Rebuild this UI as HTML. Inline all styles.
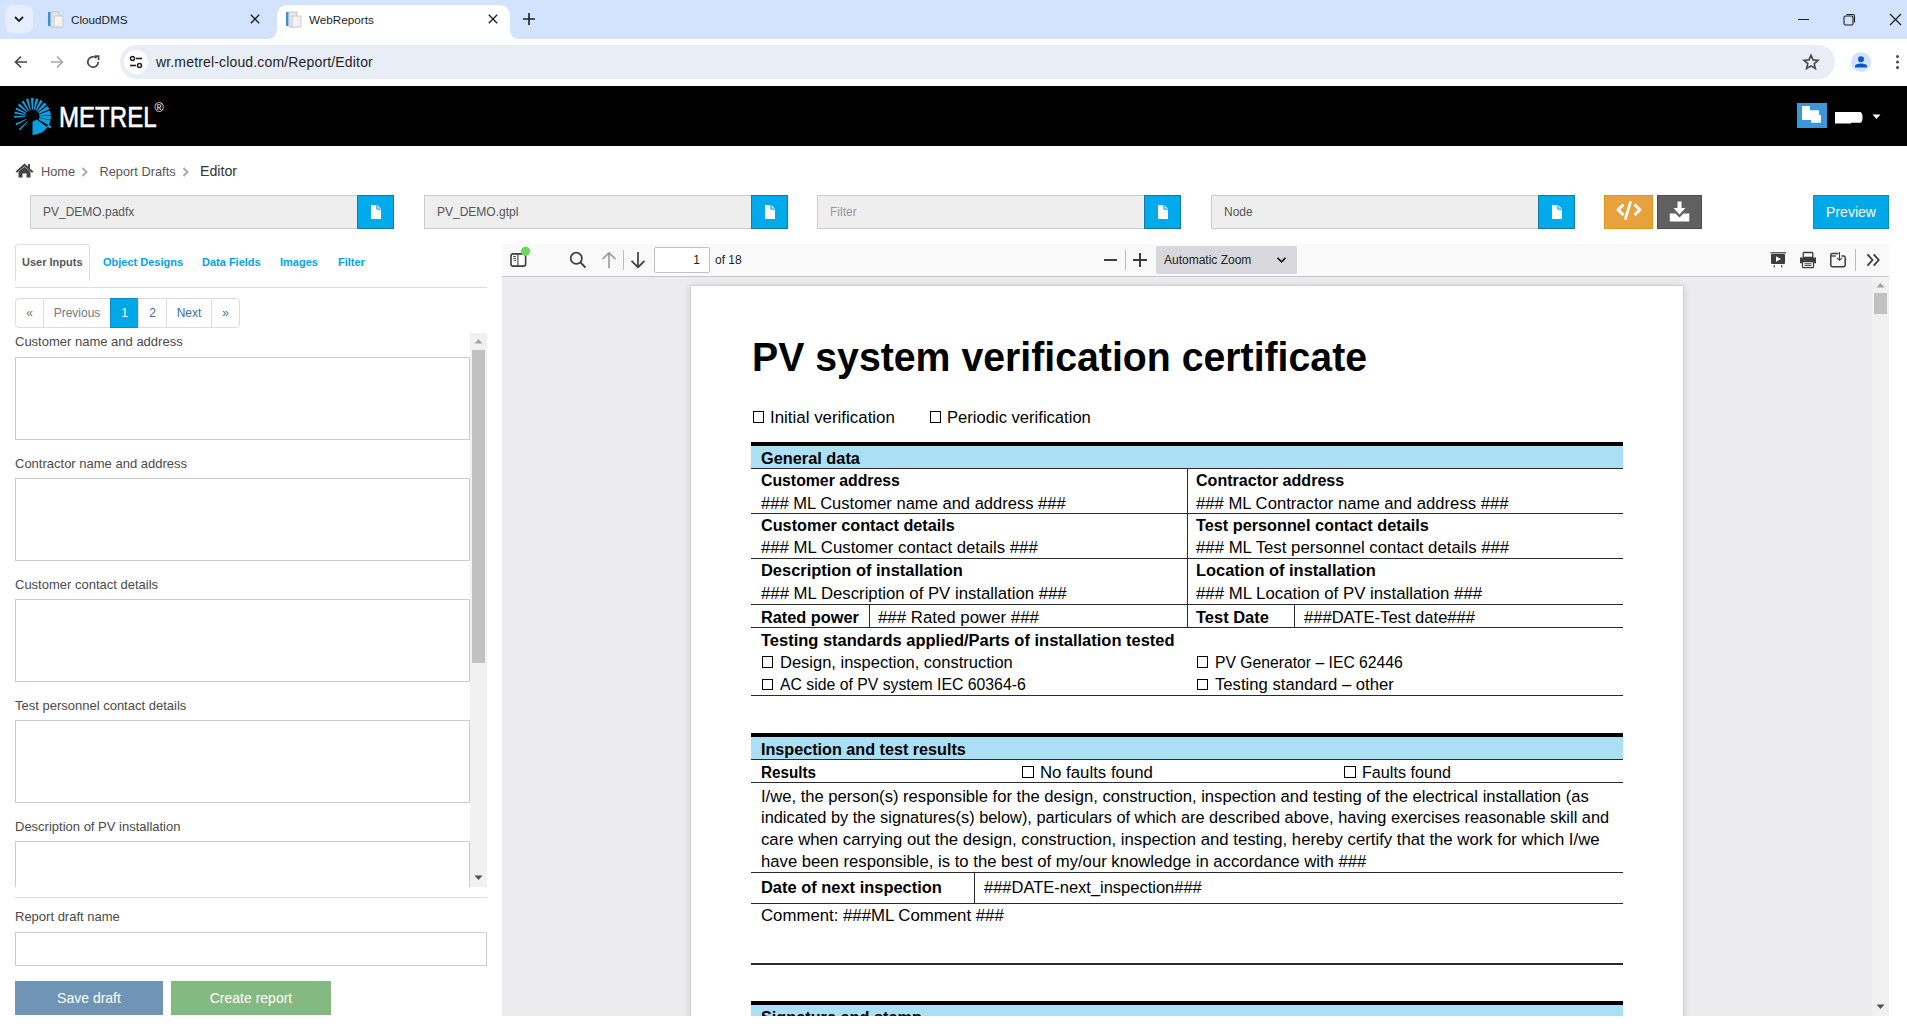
<!DOCTYPE html>
<html><head><meta charset="utf-8">
<style>
*{box-sizing:border-box;margin:0;padding:0}
html,body{width:1907px;height:1024px;overflow:hidden;background:#fff;font-family:"Liberation Sans",sans-serif;position:relative}
.a{position:absolute}
/* chrome */
#tabstrip{left:0;top:0;width:1907px;height:39px;background:#d3e3fd}
#toolbar{left:0;top:39px;width:1907px;height:47px;background:#fff}
.omni{left:120px;top:45px;width:1715px;height:34px;border-radius:17px;background:#e9eef6}
.tabtxt{font-size:11.7px;color:#1f1f1f;top:13px}
/* header */
#hdr{left:0;top:86px;width:1907px;height:60px;background:#000}
/* breadcrumb */
.bc{font-size:14px;color:#555;top:163px}
.finp{top:195px;height:34px;background:#eee;border:1px solid #ccc;font-size:12px;color:#555;padding:9px 12px;line-height:14px}
.fbtn{top:195px;height:34px;width:37px;background:#00aaeb;border:1px solid #137c9c}
.tab{font-size:11px;font-weight:bold;color:#00a2e8;top:256px}
.pg{top:298px;height:30px;border:1px solid #ddd;font-size:12px;color:#3a6fa0;text-align:center;line-height:28px}
.lbl{font-size:13px;color:#4a4a4a}
.ta{left:15px;width:455px;height:83px;border:1px solid #ccc;background:#fff}
/* pdf */
#pdfv{left:502px;top:244px;width:1386px;height:772px;background:#ebebee}
#pdftb{left:502px;top:244px;width:1386px;height:33px;background:#f9f9fa;border-bottom:1px solid #c8c8cc}
#page{left:690px;top:286px;width:993px;height:740px;background:#fff;box-shadow:0 0 0 1px #dcdcdf, 0 1px 3px 1px rgba(0,0,0,.12)}
.pt{transform-origin:0 0;font-size:16.6px;color:#000;white-space:nowrap;line-height:20px}
.pb{transform-origin:0 0;font-size:16.2px;font-weight:bold;color:#000;white-space:nowrap;line-height:20px}
.hl{height:1px;background:#000}
.vl{width:1px;background:#000}
</style></head><body>
<!-- CHROME TABSTRIP -->
<div id="tabstrip" class="a"></div>
<div class="a" style="left:5px;top:5px;width:28px;height:28px;border-radius:8px;background:#e6eefb"></div>
<svg class="a" style="left:13px;top:14px" width="12" height="10" viewBox="0 0 12 10"><path d="M2 3 L6 7 L10 3" stroke="#1f1f1f" stroke-width="1.8" fill="none"/></svg>
<!-- tab1 icon -->
<svg class="a" style="left:47px;top:11px" width="17" height="17" viewBox="0 0 17 17"><rect x="1" y="1" width="2.5" height="14" fill="#3c8fd6"/><rect x="4" y="1" width="8" height="15" fill="#e8e8e8" stroke="#bdbdbd" stroke-width=".8"/><rect x="7" y="5" width="9" height="11" fill="#f2f2f2" stroke="#c4c4c4" stroke-width=".8"/></svg>
<div class="a tabtxt" style="left:71px">CloudDMS</div>
<svg class="a" style="left:249px;top:13px" width="12" height="12" viewBox="0 0 12 12"><path d="M1.8 1.8L10.2 10.2M10.2 1.8L1.8 10.2" stroke="#1f1f1f" stroke-width="1.35"/></svg>
<!-- active tab -->
<div class="a" style="left:277px;top:5px;width:233px;height:34px;background:#fff;border-radius:10px 10px 0 0"></div>
<svg class="a" style="left:267px;top:29px" width="10" height="10"><path d="M0 10 Q10 10 10 0 L10 10Z" fill="#fff"/></svg>
<svg class="a" style="left:510px;top:29px" width="10" height="10"><path d="M10 10 Q0 10 0 0 L0 10Z" fill="#fff"/></svg>
<svg class="a" style="left:285px;top:11px" width="17" height="17" viewBox="0 0 17 17"><rect x="1" y="1" width="2.5" height="14" fill="#3c8fd6"/><rect x="4" y="1" width="8" height="15" fill="#e8e8e8" stroke="#bdbdbd" stroke-width=".8"/><rect x="7" y="5" width="9" height="11" fill="#f2f2f2" stroke="#c4c4c4" stroke-width=".8"/></svg>
<div class="a tabtxt" style="left:309px">WebReports</div>
<svg class="a" style="left:487px;top:13px" width="12" height="12" viewBox="0 0 12 12"><path d="M1.8 1.8L10.2 10.2M10.2 1.8L1.8 10.2" stroke="#1f1f1f" stroke-width="1.35"/></svg>
<svg class="a" style="left:522px;top:12px" width="14" height="14" viewBox="0 0 14 14"><path d="M7 1V13M1 7H13" stroke="#1f1f1f" stroke-width="1.6"/></svg>
<!-- window controls -->
<div class="a" style="left:1798px;top:19px;width:11px;height:1px;background:#1f1f1f"></div>
<svg class="a" style="left:1843px;top:13px" width="13" height="13" viewBox="0 0 13 13"><rect x="1" y="3" width="9" height="9" rx="1.5" fill="none" stroke="#1f1f1f" stroke-width="1.1"/><path d="M3.5 1.5H10A1.5 1.5 0 0 1 11.5 3V9.5" fill="none" stroke="#1f1f1f" stroke-width="1.1"/></svg>
<svg class="a" style="left:1889px;top:13px" width="13" height="13" viewBox="0 0 13 13"><path d="M1 1L12 12M12 1L1 12" stroke="#1f1f1f" stroke-width="1.2"/></svg>
<!-- TOOLBAR -->
<div id="toolbar" class="a"></div>
<svg class="a" style="left:13px;top:54px" width="16" height="16" viewBox="0 0 16 16"><path d="M14 8H2.5M8 2.5L2.5 8L8 13.5" stroke="#474747" stroke-width="1.7" fill="none"/></svg>
<svg class="a" style="left:49px;top:54px" width="16" height="16" viewBox="0 0 16 16"><path d="M2 8H13.5M8 2.5L13.5 8L8 13.5" stroke="#a8a8a8" stroke-width="1.7" fill="none"/></svg>
<svg class="a" style="left:85px;top:54px" width="16" height="16" viewBox="0 0 16 16"><path d="M13.2 8A5.2 5.2 0 1 1 11.6 4.2" stroke="#474747" stroke-width="1.7" fill="none"/><path d="M9.5 2.2H13.6V6.3" stroke="#474747" stroke-width="1.7" fill="none"/></svg>
<div class="a omni"></div>
<div class="a" style="left:124px;top:50px;width:24px;height:24px;border-radius:12px;background:#fff"></div>
<svg class="a" style="left:128px;top:54px" width="16" height="16" viewBox="0 0 16 16"><circle cx="4.5" cy="4.5" r="2" fill="none" stroke="#1f1f1f" stroke-width="1.5"/><path d="M8 4.5H14" stroke="#1f1f1f" stroke-width="1.6"/><circle cx="11.5" cy="11.5" r="2" fill="none" stroke="#1f1f1f" stroke-width="1.5"/><path d="M2 11.5H8" stroke="#1f1f1f" stroke-width="1.6"/></svg>
<div class="a" style="left:156px;top:54px;font-size:14px;letter-spacing:0.16px;color:#1f1f1f">wr.metrel-cloud.com/Report/Editor</div>
<svg class="a" style="left:1801px;top:52px" width="20" height="20" viewBox="0 0 20 20"><path d="M10 3.2L12 7.9L17 8.3L13.2 11.6L14.4 16.5L10 13.9L5.6 16.5L6.8 11.6L3 8.3L8 7.9Z" fill="none" stroke="#474747" stroke-width="1.6" stroke-linejoin="miter"/></svg>
<div class="a" style="left:1851px;top:52px;width:20px;height:20px;border-radius:10px;background:#d3e3fd"></div>
<svg class="a" style="left:1853px;top:54px" width="16" height="16" viewBox="0 0 16 16"><circle cx="8" cy="5.3" r="3" fill="#0b57d0"/><path d="M2 13.5V12.3C2 10.6 5 9.6 8 9.6S14 10.6 14 12.3V13.5Z" fill="#0b57d0"/></svg>
<div class="a" style="left:1895.5px;top:55px;width:3.2px;height:3.2px;border-radius:1.6px;background:#474747;box-shadow:0 5.5px 0 #474747,0 11px 0 #474747"></div>

<!-- HEADER -->
<div id="hdr" class="a"></div>
<svg class="a" style="left:10px;top:94px" width="46" height="46" viewBox="0 0 46 46"><path d="M17.82 27.70L10.19 36.17A18.4 18.4 0 0 1 8.93 34.93L17.34 27.23ZM16.32 25.79L6.25 31.14A18.4 18.4 0 0 1 5.44 29.39L16.01 25.12ZM15.52 22.99L4.14 23.78A18.4 18.4 0 0 1 4.11 21.86L15.50 22.26ZM15.59 21.40L4.33 19.62A18.4 18.4 0 0 1 4.81 17.43L15.77 20.57ZM16.01 19.88L5.44 15.61A18.4 18.4 0 0 1 6.41 13.58L16.38 19.11ZM16.91 18.29L7.81 11.43A18.4 18.4 0 0 1 9.49 9.49L17.55 17.55ZM18.29 16.91L11.43 7.81A18.4 18.4 0 0 1 13.58 6.41L19.11 16.38ZM19.99 15.96L15.91 5.32A18.4 18.4 0 0 1 18.36 4.57L20.93 15.68ZM21.89 15.53L20.90 4.17A18.4 18.4 0 0 1 23.78 4.14L22.99 15.52ZM23.72 15.61L25.70 4.38A18.4 18.4 0 0 1 28.49 5.10L24.78 15.88ZM25.46 16.16L30.28 5.82A18.4 18.4 0 0 1 32.79 7.25L26.41 16.70ZM27.00 17.14L34.33 8.40A18.4 18.4 0 0 1 36.60 10.67L27.86 18.00ZM28.23 18.48L37.57 11.95A18.4 18.4 0 0 1 39.44 15.31L28.94 19.76ZM29.12 20.22L39.90 16.51A18.4 18.4 0 0 1 40.83 20.90L29.47 21.89ZM29.50 22.26L40.89 21.86A18.4 18.4 0 0 1 40.62 25.70L29.39 23.72ZM29.35 23.96L40.50 26.33A18.4 18.4 0 0 1 38.75 31.14L28.68 25.79ZM26.71 25.56L37.39 33.32A18.4 18.4 0 0 1 22.50 40.90L22.50 27.70Z" fill="#0aa0e0"/><path d="M37.50 31.51L40.93 33.57" stroke="#0aa0e0" stroke-width="2.4"/></svg>
<div class="a" style="left:58.5px;top:100px;font-size:29px;line-height:34px;color:#fff;-webkit-text-stroke:0.6px #fff;transform:scaleX(0.83);transform-origin:0 0">METREL</div>
<div class="a" style="left:154.5px;top:100.5px;font-size:12.5px;line-height:14px;color:#fff">&#174;</div>
<div class="a" style="left:1797px;top:103px;width:30px;height:25px;background:#3a97dc"></div>
<svg class="a" style="left:1797px;top:103px" width="30" height="25"><path d="M5 3H13V7.2H22.1V11.9H23.9V19.8H14V16.9H5Z" fill="#fff"/></svg>
<svg class="a" style="left:1834px;top:111px" width="32" height="13"><path d="M1 1H26.5A2.5 5.5 0 0 1 26.5 11.8H17V12.5H1Z" fill="#fff"/></svg>
<svg class="a" style="left:1872px;top:114px" width="10" height="6"><path d="M0.5 0.5H8.5L4.5 5Z" fill="#fff"/></svg>

<!-- BREADCRUMB -->
<svg class="a" style="left:15px;top:163px" width="19" height="15" viewBox="0 0 19 15"><path d="M9.5 0.5L0.5 8.5L2 9.8L9.5 3.2L17 9.8L18.5 8.5L15 5.4V1H13V3.6Z" fill="#444"/><path d="M3.5 8.8L9.5 3.8L15.5 8.8V14.5H11.5V10.5H7.5V14.5H3.5Z" fill="#444"/></svg>
<div class="a bc" style="left:41px;font-size:12.8px;top:164px">Home</div>
<svg class="a" style="left:81px;top:167px" width="8" height="10" viewBox="0 0 8 10"><path d="M1.5 1L5.5 5L1.5 9" fill="none" stroke="#a9a9b3" stroke-width="2"/></svg>
<div class="a bc" style="left:99.5px;font-size:12.8px;top:164px">Report Drafts</div>
<svg class="a" style="left:182px;top:167px" width="8" height="10" viewBox="0 0 8 10"><path d="M1.5 1L5.5 5L1.5 9" fill="none" stroke="#a9a9b3" stroke-width="2"/></svg>
<div class="a bc" style="left:200px;color:#333;font-size:14.2px;top:163px">Editor</div>

<!-- FILE INPUTS -->
<div class="a finp" style="left:30px;width:328px">PV_DEMO.padfx</div>
<div class="a fbtn" style="left:357px"></div><svg class="a" style="left:370px;top:204px" width="12" height="16" viewBox="0 0 12 16"><path d="M1 1H7.2L11 4.8V15H1Z" fill="#fff"/><path d="M6.8 1V5.2H11" fill="#9fdcf5" stroke="#00a2e8" stroke-width="0.9"/></svg>
<div class="a finp" style="left:424px;width:328px">PV_DEMO.gtpl</div>
<div class="a fbtn" style="left:751px"></div><svg class="a" style="left:764px;top:204px" width="12" height="16" viewBox="0 0 12 16"><path d="M1 1H7.2L11 4.8V15H1Z" fill="#fff"/><path d="M6.8 1V5.2H11" fill="#9fdcf5" stroke="#00a2e8" stroke-width="0.9"/></svg>
<div class="a finp" style="left:817px;width:328px;color:#999">Filter</div>
<div class="a fbtn" style="left:1144px"></div><svg class="a" style="left:1157px;top:204px" width="12" height="16" viewBox="0 0 12 16"><path d="M1 1H7.2L11 4.8V15H1Z" fill="#fff"/><path d="M6.8 1V5.2H11" fill="#9fdcf5" stroke="#00a2e8" stroke-width="0.9"/></svg>
<div class="a finp" style="left:1211px;width:328px">Node</div>
<div class="a fbtn" style="left:1538px"></div><svg class="a" style="left:1551px;top:204px" width="12" height="16" viewBox="0 0 12 16"><path d="M1 1H7.2L11 4.8V15H1Z" fill="#fff"/><path d="M6.8 1V5.2H11" fill="#9fdcf5" stroke="#00a2e8" stroke-width="0.9"/></svg>
<div class="a" style="left:1604px;top:195px;width:49px;height:34px;background:#e8a23d;border:1px solid #e39320"></div>
<svg class="a" style="left:1616px;top:200px" width="26" height="22" viewBox="0 0 26 22"><path d="M7.5 4.5L2.2 9.8L7.5 15.1" fill="none" stroke="#fff" stroke-width="2.9"/><path d="M18.5 4.5L23.8 9.8L18.5 15.1" fill="none" stroke="#fff" stroke-width="2.9"/><path d="M14.7 1.4L9.2 19.7" stroke="#fff" stroke-width="2.7"/></svg>
<div class="a" style="left:1657px;top:195px;width:45px;height:34px;background:#606060;border:1px solid #4b4b4b"></div>
<svg class="a" style="left:1668px;top:200px" width="23" height="23" viewBox="0 0 23 23"><path d="M9.5 1.5H13.5V8H17.5L11.5 14.5L5.5 8H9.5Z" fill="#fff"/><path d="M1.8 13.5H7.5L11.5 17.5L15.5 13.5H21.3V21.5H1.8Z" fill="#fff"/></svg>
<div class="a" style="left:1813px;top:195px;width:76px;height:34px;background:#00a8e8;border:1px solid #0a8cc8;color:#fff;font-size:14px;text-align:center;line-height:32px">Preview</div>

<!-- LEFT PANEL -->
<div class="a" style="left:15px;top:244px;width:75px;height:37px;border:1px solid #ddd;border-bottom:none;border-radius:4px 4px 0 0"></div>
<div class="a tab" style="left:22px;color:#555">User Inputs</div>
<div class="a tab" style="left:103px">Object Designs</div>
<div class="a tab" style="left:202px">Data Fields</div>
<div class="a tab" style="left:280px">Images</div>
<div class="a tab" style="left:338px">Filter</div>
<div class="a" style="left:15px;top:287px;width:472px;height:1px;background:#ddd"></div>


<!-- pagination -->
<div class="a pg" style="left:15px;width:29px;color:#777;border-radius:4px 0 0 4px">&#171;</div>
<div class="a pg" style="left:43px;width:68px;color:#777">Previous</div>
<div class="a pg" style="left:110px;width:29px;background:#00a8e8;border-color:#0a8ad0;color:#fff">1</div>
<div class="a pg" style="left:138px;width:29px">2</div>
<div class="a pg" style="left:166px;width:46px">Next</div>
<div class="a pg" style="left:211px;width:29px;border-radius:0 4px 4px 0">&#187;</div>
<!-- scroll area -->
<div class="a lbl" style="left:15px;top:334px">Customer name and address</div>
<div class="a ta" style="top:357px"></div>
<div class="a lbl" style="left:15px;top:456px">Contractor name and address</div>
<div class="a ta" style="top:478px"></div>
<div class="a lbl" style="left:15px;top:577px">Customer contact details</div>
<div class="a ta" style="top:599px"></div>
<div class="a lbl" style="left:15px;top:698px">Test personnel contact details</div>
<div class="a ta" style="top:720px"></div>
<div class="a lbl" style="left:15px;top:819px">Description of PV installation</div>
<div class="a ta" style="top:841px;height:46px;border-bottom:none"></div>
<div class="a" style="left:470px;top:333px;width:17px;height:554px;background:#f1f1f1"></div>
<div class="a" style="left:472px;top:350px;width:13px;height:313px;background:#c1c1c1"></div>
<svg class="a" style="left:474px;top:338px" width="9" height="6"><path d="M0.5 5.5H8.5L4.5 1Z" fill="#a3a3a3"/></svg>
<svg class="a" style="left:474px;top:875px" width="9" height="6"><path d="M0.5 0.5H8.5L4.5 5Z" fill="#505050"/></svg>
<div class="a" style="left:15px;top:897px;width:472px;height:1px;background:#ddd"></div>
<div class="a lbl" style="left:15px;top:908.5px">Report draft name</div>
<div class="a" style="left:15px;top:932px;width:472px;height:34px;border:1px solid #ccc"></div>
<div class="a" style="left:15px;top:981px;width:148px;height:34px;background:#7094b3;color:#fff;font-size:14px;text-align:center;line-height:34px">Save draft</div>
<div class="a" style="left:171px;top:981px;width:160px;height:34px;background:#84b982;color:#fff;font-size:14px;text-align:center;line-height:34px">Create report</div>

<!-- PDF -->
<div class="a" style="left:502px;top:244px;width:1387px;height:772px;background:#ececef"></div>
<div class="a" style="left:502px;top:244px;width:1387px;height:33px;background:#f9f9fa;border-bottom:1px solid #c6c6ca"></div>
<!-- sidebar toggle -->
<svg class="a" style="left:509px;top:246px" width="24" height="24" viewBox="0 0 24 24"><rect x="2" y="7.9" width="14.6" height="12.2" rx="2.2" fill="#fff" stroke="#3d3d3d" stroke-width="1.6"/><path d="M8.9 8V20" stroke="#3d3d3d" stroke-width="1.1"/><path d="M4.2 10.6H6.9M4.2 12.6H6.9M4.9 14.6H6.9" stroke="#3d3d3d" stroke-width="1"/><circle cx="16.5" cy="5.3" r="4.6" fill="#6cd95a"/></svg>
<!-- search -->
<svg class="a" style="left:568px;top:250px" width="20" height="20" viewBox="0 0 20 20"><circle cx="8.3" cy="8.3" r="5.6" fill="none" stroke="#3d3d3d" stroke-width="1.7"/><path d="M12.3 12.3L17.5 17.5" stroke="#3d3d3d" stroke-width="1.9"/></svg>
<!-- up/down -->
<svg class="a" style="left:600px;top:250px" width="18" height="20" viewBox="0 0 18 20"><path d="M9 18.2V3M2.5 9.2L9 2.8L15.5 9.2" fill="none" stroke="#9a9a9a" stroke-width="1.6"/></svg>
<div class="a" style="left:623px;top:250px;width:1px;height:20px;background:#bbb"></div>
<svg class="a" style="left:629px;top:250px" width="18" height="20" viewBox="0 0 18 20"><path d="M9 2V17M2.5 10.8L9 17.2L15.5 10.8" fill="none" stroke="#3d3d3d" stroke-width="1.7"/></svg>
<div class="a" style="left:654px;top:247px;width:56px;height:26px;border:1px solid #c2c2c6;border-radius:2px;background:#fff;font-size:12px;color:#222;text-align:right;padding-right:9px;line-height:24px">1</div>
<div class="a" style="left:715px;top:253px;font-size:12px;color:#222">of 18</div>
<!-- zoom -->
<div class="a" style="left:1104px;top:259px;width:13px;height:2px;background:#3d3d3d"></div>
<div class="a" style="left:1125px;top:250px;width:1px;height:20px;background:#bbb"></div>
<div class="a" style="left:1133px;top:259px;width:14px;height:2px;background:#3d3d3d"></div>
<div class="a" style="left:1139px;top:253px;width:2px;height:14px;background:#3d3d3d"></div>
<div class="a" style="left:1156px;top:246px;width:141px;height:28px;border-radius:2px;background:#d8d8dc"></div>
<div class="a" style="left:1164px;top:253px;font-size:12px;color:#222">Automatic Zoom</div>
<svg class="a" style="left:1276px;top:256px" width="11" height="8" viewBox="0 0 11 8"><path d="M1.5 1.8L5.5 5.8L9.5 1.8" fill="none" stroke="#222" stroke-width="1.8"/></svg>
<!-- right icons -->
<svg class="a" style="left:1769px;top:251px" width="18" height="18" viewBox="0 0 18 18"><path d="M1.5 1.8H17" stroke="#3d3d3d" stroke-width="1.2"/><rect x="2" y="3" width="14" height="10" rx="1" fill="#3d3d3d"/><path d="M7 5.2L12 8L7 10.8Z" fill="#f9f9fa"/><path d="M5.5 14L5 16.5M12.5 14L13 16.5" stroke="#3d3d3d" stroke-width="1.1"/></svg>
<svg class="a" style="left:1799px;top:251px" width="18" height="18" viewBox="0 0 18 18"><rect x="4.2" y="1.5" width="9.6" height="5" rx="0.8" fill="none" stroke="#3d3d3d" stroke-width="1.3"/><path d="M1 6.5H17V12.2H14V10H4V12.2H1Z" fill="#3d3d3d"/><rect x="3.5" y="10.7" width="11" height="6" rx="0.8" fill="#fff" stroke="#3d3d3d" stroke-width="1.3"/><path d="M5.5 12.8H12.5M5.5 14.6H12.5" stroke="#3d3d3d" stroke-width="1"/></svg>
<svg class="a" style="left:1829px;top:251px" width="18" height="18" viewBox="0 0 18 18"><path d="M9.5 2.5H3.5A1.7 1.7 0 0 0 1.8 4.2V14A1.7 1.7 0 0 0 3.5 15.8H14.5A1.7 1.7 0 0 0 16.2 14V6.8A1.7 1.7 0 0 0 14.5 5.1H12.5" fill="none" stroke="#3d3d3d" stroke-width="1.5"/><path d="M2 5H7" stroke="#3d3d3d" stroke-width="1.3"/><path d="M10.5 1V9M8 6.8L10.5 9.3L13 6.8" fill="none" stroke="#3d3d3d" stroke-width="1.1"/></svg>
<div class="a" style="left:1855px;top:249px;width:1px;height:22px;background:#bbb"></div>
<svg class="a" style="left:1866px;top:253px" width="15" height="14" viewBox="0 0 15 14"><path d="M1.5 1.3L6.5 7L1.5 12.7M7.7 1.3L12.7 7L7.7 12.7" fill="none" stroke="#3d3d3d" stroke-width="1.8"/></svg>
<!-- page -->
<div class="a" style="left:502px;top:277px;width:1370px;height:739px;overflow:hidden">
<div class="a" style="left:189px;top:9px;width:992px;height:760px;background:#fff;box-shadow:0 0 0 1px rgba(0,0,0,.06),0 1px 7px 1px rgba(0,0,0,.13)"></div>
<!-- pagecontent -->
<div class="a pb" style="left:250.00px;top:70.11px;font-size:40.5px;transform:scaleX(0.9689)">PV system verification certificate</div>
<div class="a" style="left:250.50px;top:134.40px;width:11.6px;height:11.6px;border:1px solid #000"></div>
<div class="a pt" style="left:268.00px;top:131.35px;font-size:16.8px;transform:scaleX(1.0066)">Initial verification</div>
<div class="a" style="left:427.50px;top:134.40px;width:11.6px;height:11.6px;border:1px solid #000"></div>
<div class="a pt" style="left:445.00px;top:131.35px;font-size:16.8px;transform:scaleX(0.9886)">Periodic verification</div>
<div class="a" style="left:249px;top:169px;width:872px;height:22px;background:#abdff4"></div>
<div class="a" style="left:249px;top:165.00px;width:872px;height:4px;background:#000"></div>
<div class="a pb" style="left:259.00px;top:171.75px;font-size:16.8px;transform:scaleX(0.9728)">General data</div>
<div class="a" style="left:249px;top:190.50px;width:872px;height:1.3px;background:#2a2a2a"></div>
<div class="a pb" style="left:259.00px;top:193.55px;font-size:16.8px;transform:scaleX(0.9423)">Customer address</div>
<div class="a pb" style="left:694.00px;top:193.55px;font-size:16.8px;transform:scaleX(0.9576)">Contractor address</div>
<div class="a pt" style="left:259.00px;top:216.95px;font-size:16.8px;transform:scaleX(0.9858)">### ML Customer name and address ###</div>
<div class="a pt" style="left:694.00px;top:216.95px;font-size:16.8px;transform:scaleX(0.9930)">### ML Contractor name and address ###</div>
<div class="a" style="left:249px;top:236.00px;width:872px;height:1.3px;background:#2a2a2a"></div>
<div class="a pb" style="left:259.00px;top:239.35px;font-size:16.8px;transform:scaleX(0.9666)">Customer contact details</div>
<div class="a pb" style="left:694.00px;top:239.35px;font-size:16.8px;transform:scaleX(0.9687)">Test personnel contact details</div>
<div class="a pt" style="left:259.00px;top:261.35px;font-size:16.8px;transform:scaleX(0.9977)">### ML Customer contact details ###</div>
<div class="a pt" style="left:694.00px;top:261.35px;font-size:16.8px;transform:scaleX(0.9991)">### ML Test personnel contact details ###</div>
<div class="a" style="left:249px;top:281.00px;width:872px;height:1.3px;background:#2a2a2a"></div>
<div class="a pb" style="left:259.00px;top:284.25px;font-size:16.8px;transform:scaleX(0.9793)">Description of installation</div>
<div class="a pb" style="left:694.00px;top:284.25px;font-size:16.8px;transform:scaleX(0.9785)">Location of installation</div>
<div class="a pt" style="left:259.00px;top:307.05px;font-size:16.8px;transform:scaleX(0.9980)">### ML Description of PV installation ###</div>
<div class="a pt" style="left:694.00px;top:307.05px;font-size:16.8px;transform:scaleX(1.0011)">### ML Location of PV installation ###</div>
<div class="a" style="left:249px;top:326.50px;width:872px;height:1.3px;background:#2a2a2a"></div>
<div class="a pb" style="left:259.00px;top:330.65px;font-size:16.8px;transform:scaleX(0.9721)">Rated power</div>
<div class="a pt" style="left:376.00px;top:330.65px;font-size:16.8px;transform:scaleX(1.0023)">### Rated power ###</div>
<div class="a pb" style="left:694.00px;top:330.65px;font-size:16.8px;transform:scaleX(0.9816)">Test Date</div>
<div class="a pt" style="left:802.00px;top:330.65px;font-size:16.8px;transform:scaleX(0.9874)">###DATE-Test date###</div>
<div class="a" style="left:249px;top:350.00px;width:872px;height:1.3px;background:#2a2a2a"></div>
<div class="a" style="left:685.00px;top:191px;width:1.3px;height:159px;background:#2a2a2a"></div>
<div class="a" style="left:367.00px;top:327px;width:1.3px;height:23px;background:#2a2a2a"></div>
<div class="a" style="left:792.00px;top:327px;width:1.3px;height:23px;background:#2a2a2a"></div>
<div class="a pb" style="left:259.00px;top:353.55px;font-size:16.8px;transform:scaleX(0.9820)">Testing standards applied/Parts of installation tested</div>
<div class="a" style="left:259.80px;top:379.20px;width:11.6px;height:11.6px;border:1px solid #000"></div>
<div class="a pt" style="left:278.00px;top:375.65px;font-size:16.8px;transform:scaleX(0.9824)">Design, inspection, construction</div>
<div class="a" style="left:694.80px;top:379.20px;width:11.6px;height:11.6px;border:1px solid #000"></div>
<div class="a pt" style="left:713.00px;top:375.65px;font-size:16.8px;transform:scaleX(0.9364)">PV Generator – IEC 62446</div>
<div class="a" style="left:259.80px;top:401.70px;width:11.6px;height:11.6px;border:1px solid #000"></div>
<div class="a pt" style="left:278.00px;top:398.35px;font-size:16.8px;transform:scaleX(0.9409)">AC side of PV system IEC 60364-6</div>
<div class="a" style="left:694.80px;top:401.70px;width:11.6px;height:11.6px;border:1px solid #000"></div>
<div class="a pt" style="left:713.00px;top:398.35px;font-size:16.8px;transform:scaleX(0.9932)">Testing standard – other</div>
<div class="a" style="left:249px;top:417.80px;width:872px;height:1.3px;background:#2a2a2a"></div>
<div class="a" style="left:249px;top:460px;width:872px;height:22px;background:#abdff4"></div>
<div class="a" style="left:249px;top:456.00px;width:872px;height:4px;background:#000"></div>
<div class="a pb" style="left:259.00px;top:462.75px;font-size:16.8px;transform:scaleX(0.9632)">Inspection and test results</div>
<div class="a" style="left:249px;top:481.70px;width:872px;height:1.3px;background:#2a2a2a"></div>
<div class="a pb" style="left:259.00px;top:485.85px;font-size:16.8px;transform:scaleX(0.9064)">Results</div>
<div class="a" style="left:520.00px;top:489.20px;width:11.6px;height:11.6px;border:1px solid #000"></div>
<div class="a pt" style="left:538.00px;top:485.85px;font-size:16.8px;transform:scaleX(1.0000)">No faults found</div>
<div class="a" style="left:842.00px;top:489.20px;width:11.6px;height:11.6px;border:1px solid #000"></div>
<div class="a pt" style="left:860.00px;top:485.85px;font-size:16.8px;transform:scaleX(0.9627)">Faults found</div>
<div class="a" style="left:249px;top:505.00px;width:872px;height:1.3px;background:#2a2a2a"></div>
<div class="a pt" style="left:259.00px;top:509.75px;font-size:16.8px;transform:scaleX(0.9893)">I/we, the person(s) responsible for the design, construction, inspection and testing of the electrical installation (as</div>
<div class="a pt" style="left:259.00px;top:531.35px;font-size:16.8px;transform:scaleX(0.9745)">indicated by the signatures(s) below), particulars of which are described above, having exercises reasonable skill and</div>
<div class="a pt" style="left:259.00px;top:552.95px;font-size:16.8px;transform:scaleX(0.9966)">care when carrying out the design, construction, inspection and testing, hereby certify that the work for which I/we</div>
<div class="a pt" style="left:259.00px;top:574.55px;font-size:16.8px;transform:scaleX(0.9936)">have been responsible, is to the best of my/our knowledge in accordance with ###</div>
<div class="a" style="left:249px;top:594.70px;width:872px;height:1.3px;background:#2a2a2a"></div>
<div class="a pb" style="left:259.00px;top:601.35px;font-size:16.8px;transform:scaleX(0.9794)">Date of next inspection</div>
<div class="a pt" style="left:482.00px;top:601.35px;font-size:16.8px;transform:scaleX(0.9822)">###DATE-next_inspection###</div>
<div class="a" style="left:471.80px;top:595px;width:1.3px;height:31px;background:#2a2a2a"></div>
<div class="a" style="left:249px;top:625.70px;width:872px;height:1.3px;background:#2a2a2a"></div>
<div class="a pt" style="left:259.00px;top:629.35px;font-size:16.8px;transform:scaleX(0.9997)">Comment: ###ML Comment ###</div>
<div class="a" style="left:249px;top:686.30px;width:872px;height:1.3px;background:#2a2a2a"></div>
<div class="a" style="left:249px;top:728px;width:872px;height:25px;background:#abdff4"></div>
<div class="a" style="left:249px;top:724.00px;width:872px;height:4px;background:#000"></div>
<div class="a pb" style="left:259.00px;top:730.85px;font-size:16.8px;transform:scaleX(0.9690)">Signature and stamp</div>
<!-- /pagecontent -->
</div>
<!-- pdf scrollbar -->
<div class="a" style="left:1872px;top:277px;width:17px;height:739px;background:#f1f1f1"></div>
<div class="a" style="left:1874px;top:293px;width:13px;height:21px;background:#c1c1c1"></div>
<svg class="a" style="left:1876px;top:282px" width="9" height="6"><path d="M0.5 5.5H8.5L4.5 1Z" fill="#a3a3a3"/></svg>
<svg class="a" style="left:1876px;top:1004px" width="9" height="6"><path d="M0.5 0.5H8.5L4.5 5Z" fill="#505050"/></svg>
</body></html>
